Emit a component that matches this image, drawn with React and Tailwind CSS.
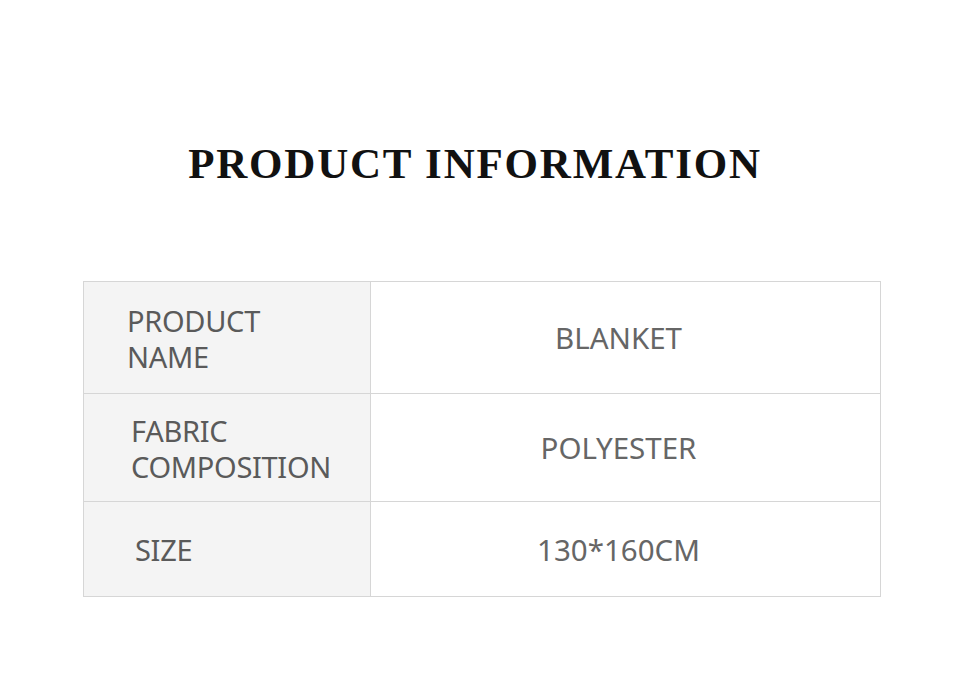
export default function App() {
  const rows = [
    { label: ["PRODUCT", "NAME"], value: "BLANKET", h: "h-[111px]", pl: "pl-[43px]" },
    { label: ["FABRIC", "COMPOSITION"], value: "POLYESTER", h: "h-[108px]", pl: "pl-[47px]" },
    { label: ["SIZE"], value: "130*160CM", h: "h-[95px]", pl: "pl-[51px]" },
  ];

  return (
    <div className="w-[960px] h-[690px] bg-white flex flex-col items-center">
      <h1 className="mt-[140px] mr-[10px] h-[46px] flex items-center font-['Liberation_Serif',serif] font-bold text-[43px] leading-none text-[#111] tracking-[1.8px]">
        PRODUCT INFORMATION
      </h1>

      <div className="mt-[95px] w-[798px] ml-[4px] border border-[#d6d6d6] font-['Noto_Sans',sans-serif] text-[#5a5a5a]">
        {rows.map((r, i) => (
          <div key={i} className={`flex ${r.h} ${i > 0 ? "border-t border-[#d6d6d6]" : ""}`}>
            <div className={`w-[287px] bg-[#f4f4f4] border-r border-[#d6d6d6] flex flex-col justify-center ${r.pl} pt-[2px] text-[29px] leading-[36px] tracking-[-0.3px]`}>
              {r.label.map((l) => (
                <span key={l}>{l}</span>
              ))}
            </div>
            <div className="flex-1 flex items-center justify-center pr-[14px] pt-[2px] text-[29.5px] text-[#666]">
              {r.value}
            </div>
          </div>
        ))}
      </div>
    </div>
  );
}
